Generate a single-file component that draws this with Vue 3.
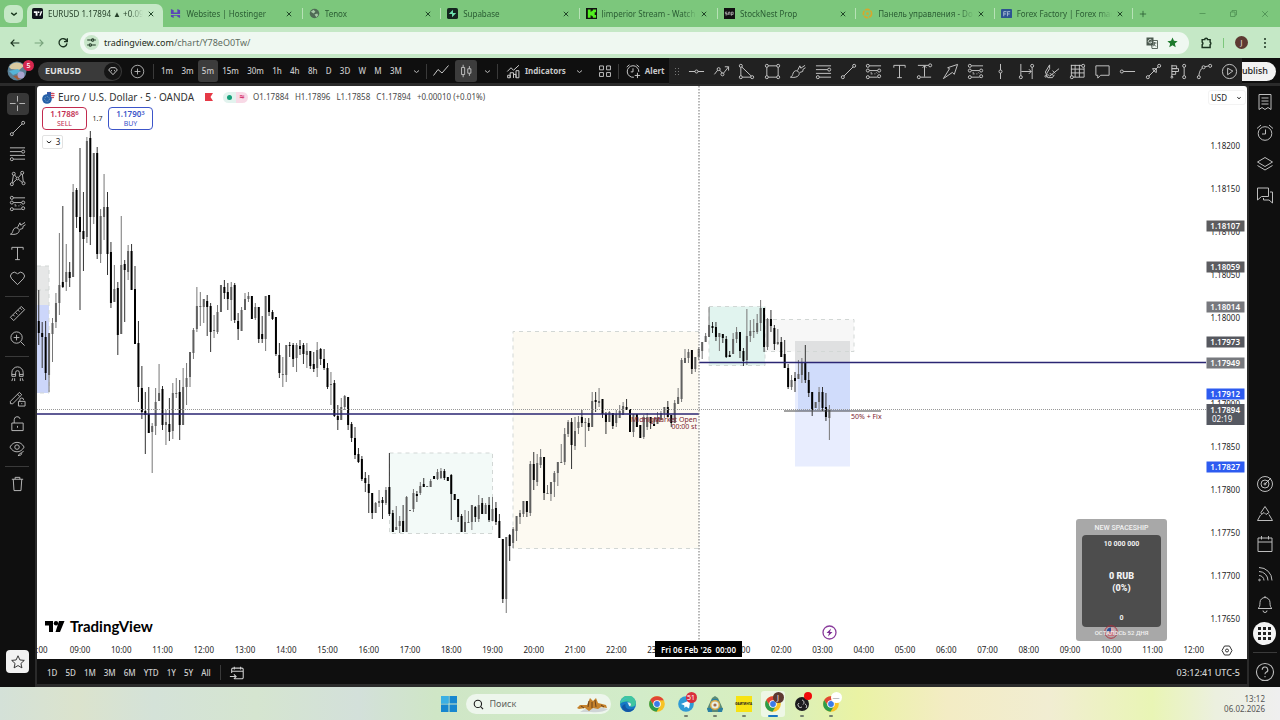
<script setup>
import { h } from 'vue'

const c = (x, y, r = 1.6) => `M${x - r} ${y}a${r} ${r} 0 1 0 ${2 * r} 0a${r} ${r} 0 1 0 ${-2 * r} 0`

const shapes = {
  cross: ['M9 1v6M9 11v6M1 9h6M11 9h6'],
  trend: ['M4.2 13.8L13.8 4.2', c(3, 15), c(15, 3)],
  fib: ['M1 3h16M1 7h12.4M1 11h16M4.6 15H17', c(15, 7), c(3, 15)],
  pattern: ['M3.3 13.4L4.7 5.6M5.8 5L8 8M10.2 7.8l2.9-3.6M14.2 4.6l.9 7.8M13.9 13L10.2 10M8 10L4 13.8', c(3, 15), c(5, 4), c(9, 9, 1.4), c(14, 3), c(15.4, 14)],
  forecast: ['M4.6 3H17M4.6 8h8.8M4.6 15h8.8M6 11.5h2M10 11.5h1M6 10h1M12 10l1 1', c(3, 3), c(3, 8), c(15, 8), c(3, 15), c(15, 14)],
  brush: ['M1.5 15c2-.5 2-2 3-4.500S8 7.500 9.800 9s1.200 4-1 5.300-5 1-7.300.7zM9 8l2.500-5 1 2.500L17 2.500M11.500 10l3-1 .500-2.500L17.500 5'],
  text: ['M3 5V2.500h12V5M9 2.500v13M6.500 15.500h5'],
  heart: ['M9 15.500L2.800 9.200a4 4 0 0 1 0-5.600 4 4 0 0 1 5.600 0L9 4.200l.6-.6a4 4 0 0 1 5.600 0 4 4 0 0 1 0 5.600z'],
  ruler: ['M1.500 13L13 1.500 16.500 5 5 16.500zM4.500 10.500l1.500 1.500M7 8l2 2M9.500 5.500L11 7M12 3.500l1.500 1.500'],
  zoomin: [c(8, 8, 6), 'M12.500 12.500l4 4M8 5v6M5 8h6'],
  magnet: ['M3 12V8a6 6 0 0 1 12 0v4h-4V8a2 2 0 0 0-4 0v4zM3 10h4M11 10h4M4 14l-1 3M6 14v3M12 14v3M14 14l1 3'],
  pencil: ['M1.500 12L11 2.500 13.500 5 4 14.500H1.500zM9 4.500L11.500 7', 'M10 12h7v5h-7zM11.500 12v-1.500a2 2 0 0 1 4 0M13.500 14v1'],
  lock: ['M3 8.500h12v8H3zM5.500 8.500V5a3.200 3.200 0 0 1 6.300-.800M9 11.500v2'],
  eye: ['M1 7.500C3 4 5.500 2.500 8.500 2.500S14 4 16 7.500c-2 3.500-4.500 5-7.500 5S3 11 1 7.500z', c(8.5, 7.5, 2.4), 'M9.500 16.500c1.500 0 1-2.500 3-2.500s1 2.500-3 2.500zM13 13.500l2.500-1.500'],
  trash: ['M3 4.500h12M6.500 4.500v-2h5v2M4.500 4.500l.8 12h7.400l.8-12'],
  star: ['M9 2l2.100 4.700 5 .5-3.800 3.400 1.100 5L9 13l-4.400 2.600 1.100-5L1.900 7.200l5-.5z'],
  hline: ['M1 9h6.400M10.600 9H17', c(9, 9)],
  path: ['M1.500 12L5 7.500M7 7.500l3 3.500M11 11l5.500-7M12.500 4h4v4', c(6, 6.5), c(10, 12)],
  triangle: ['M3 4.600v8.800M4.600 15h8.800M4 4.200L14 13.800', c(3, 3), c(3, 15), c(15, 15)],
  rect: ['M4.600 3h8.800M4.600 15h8.800M3 4.600v8.800M15 4.600v8.800', c(3, 3), c(15, 3), c(3, 15), c(15, 15)],
  anchor: ['M2 2.500h11.400M9 3v11.500M7 5l2-2 2 2M5 15h11', c(3, 15), c(15, 2.5)],
  arrow: ['M1.500 16.500L8 6l-2-1L16.500 1.500 13 12l-2-2z'],
  vline: ['M9 1v6.400M9 10.600V17', c(9, 9)],
  range: ['M3 1v12.400M15 4.600V17M3.500 9H14M11.500 6.500L14 9l-2.500 2.500', c(3, 15), c(15, 3)],
  gann: ['M7 2L2.500 9.500 5 15.500h5l2-3M7 2v4l-3 5 3 3 10-8M7 11l4 2M10 8l3 3', c(3, 14, 1)],
  grid: ['M2 2.500h11.500M2.500 2v12M2 6.500h14M2 10.500h14M4.600 15H16V4.600M6.500 2v13M11 2v13', c(15, 3), c(3, 15)],
  balloon: ['M2 3h14v10H7l-3 3v-3H2z'],
  ray: ['M4.600 9H17', c(3, 9)],
  arrowline: ['M4.200 13.800L13.800 4.200M8 6l4 0 0 4-2-1z', c(3, 15), c(15, 3)],
  profile: ['M2 2v13M2 3h5v3H2M2 6h7v3H2M2 9h4v3H2M15 4.600v8.800', c(2, 15, 1), c(15, 3), c(15, 15)],
  curve: ['M3 13.400C3.500 9 5 6.500 7 5M9.500 4L13.500 3', c(3, 15), c(8, 4.5), c(15, 3)],
  replay: [c(9, 9, 7.5), 'M7 5.500l5.500 3-5.500 4z'],
  line: ['M1.500 13.500L6 7.500l4 3.500 6.500-7.500'],
  candles: ['M4 5h3.500v8H4zM5.800 2v3M5.800 13v3M11 6.500h3.500v5H11zM12.800 3.500v3M12.800 11.500v3'],
  indicators: ['M2 16.500v-3h3v3zM5 16.500v-6h4v6M9 16.500v-4h3v4M12 16.500V8h3.500v8.500zM1.500 9L6 4.500l3 3 6.500-6'],
  layouts: ['M2 2.500h5v5H2zM11 2.500h5v5h-5zM2 11h5v5H2zM11 11h5v5h-5z'],
  alert: ['M10 16a6.500 6.500 0 1 1 5.500-6M9 6v4H6.500M2 4.500l3-2.500M13 2l3 2.500M14 11v6M11 14h6'],
  plus: [c(9, 9, 7.5), 'M9 5.500v7M5.500 9h7'],
  gem: ['M5.500 4h7l3 3.500L9 14.500 2.500 7.500zM6 8l1.500 1M12 8l-1.500 1'],
  chev: ['M4 7l5 4 5-4'],
  list: ['M3 1.500h12v15l-3-2-3 2-3-2-3 2zM5.500 5h7M5.500 8h7M5.500 11h7'],
  clock: [c(9, 9.5, 6.8), 'M9.500 5.500v4.500H6M1 4.500L5 1M17 4.500L13 1'],
  layers: ['M9 2.500l7.500 4.500L9 11.500 1.500 7zM1.500 10.500L9 15l7.500-4.500'],
  chat: ['M1.500 2h11v8.500h-7l-4 3.500zM14 6h2.500v11l-3.500-3H7.500v-2'],
  target: [c(9, 9, 7.5), c(9, 9, 4), c(9, 9, 1), 'M9 9l6-6'],
  ideas: ['M9 1.500l4 6-3 2-2-2-2.500 2-.5-2zM4.500 10L1.500 15.500h15L13 9.500'],
  calendar: ['M2 3h14v13.500H2zM2 7h14M5.500 1v3.500M12.500 1v3.500'],
  feed: ['M3 2.500a13 13 0 0 1 13 13M3 6.500a9 9 0 0 1 9 9M3 10.500a5 5 0 0 1 5 5', c(3.5, 15, .8)],
  bell: ['M2 13.500h14c-1.500-1-2-2.500-2-6a5 5 0 0 0-10 0c0 3.500-.5 5-2 6zM7 15.500a2 2 0 0 0 4 0M9 2.500V1'],
  help: [c(9, 9, 7.7), 'M6.500 7a2.500 2.500 0 1 1 3.500 2.300c-.8.400-1 .8-1 1.700M9 12.500v1.300'],
  goto: ['M6 15.500h8.500a1.500 1.500 0 0 0 1.500-1.500V5a1.500 1.500 0 0 0-1.500-1.500h-10A1.500 1.500 0 0 0 3 5v4M3 7h13M6 2v3M13 2v3M1 13h7M5.500 10.500L8 13l-2.500 2.500'],
  back: ['M15.500 9H3M8 4L3 9l5 5'],
  forward: ['M2.500 9H15M10 4l5 5-5 5'],
  reload: ['M14.500 6A6 6 0 1 0 15 9.500M15.500 2v5h-5'],
  tune: ['M2 5h6M14 5h2M2 13h2M10 13h6', c(11, 5, 2), c(7, 13, 2)],
  close: ['M4 4l10 10M14 4L4 14'],
  min: ['M3 9h12'],
  max: ['M3 6h9v9H3zM6 6V3h9v9h-3'],
  add: ['M9 2v14M2 9h14'],
  puzzle: ['M3 5h3.500a2 2 0 0 1 4 0H14v3.500a2 2 0 0 1 0 3.500v4H3v-4a2 2 0 0 0 0-3.500z'],
  search: [c(8, 8, 6), 'M12.500 12.500l4 4'],
}

const Icon = (p) =>
  h('svg', {
    viewBox: '0 0 18 18', width: p.size || 18, height: p.size || 18, fill: 'none',
    stroke: 'currentColor', 'stroke-width': p.weight || 1, 'aria-hidden': 'true',
  }, shapes[p.name].map((d) => h('path', { d })))
Icon.props = ['name', 'size', 'weight']

const tabs = [
  { title: 'EURUSD 1.17894 ▲ +0.09', icon: 'tv' },
  { title: 'Websites | Hostinger', icon: 'host' },
  { title: 'Tenox', icon: 'globe' },
  { title: 'Supabase', icon: 'supa' },
  { title: 'Jimperior Stream - Watch', icon: 'kick' },
  { title: 'StockNest Prop', icon: 'snp' },
  { title: 'Панель управления - Do', icon: 'ring' },
  { title: 'Forex Factory | Forex mark', icon: 'ff' },
]
const frames = ['1m', '3m', '5m', '15m', '30m', '1h', '4h', '8h', 'D', '3D', 'W', 'M', '3M']
const drawTools = ['hline', 'path', 'triangle', 'rect', 'brush', 'fib', 'trend', 'forecast', 'text', 'anchor', 'arrow',
  'forecast', 'vline', 'range', 'gann', 'grid', 'balloon', 'ray', 'arrowline', 'profile', 'curve', 'replay']
const leftTools = [
  ['cross', 'trend', 'fib', 'pattern', 'forecast', 'brush', 'text', 'heart'],
  ['ruler', 'zoomin'],
  ['magnet', 'pencil', 'lock', 'eye'],
  ['trash'],
]
const ranges = ['1D', '5D', '1M', '3M', '6M', 'YTD', '1Y', '5Y', 'All']
const ohlc = ['O1.17884', 'H1.17896', 'L1.17858', 'C1.17894', '+0.00010 (+0.01%)']

// high, body top, body bottom, low, falling
const raw = `290 321 333 345 1|322 333 337 368 1|321 337 373 380 1|333 333 375 392 0|318 323 334 362 0|293 303 322 328 0
233 285 303 315 0|206 282 287 288 1|244 272 282 291 0|262 272 278 287 1|184 192 277 277 0|188 190 217 228 1
148 217 232 310 1|192 231 239 271 1|137 141 237 243 0|131 138 217 245 1|153 153 217 224 0|147 153 254 259 1
209 216 254 263 0|174 207 217 240 0|192 207 254 275 1|242 252 303 308 1|265 289 302 302 0|282 288 335 355 1
216 265 334 334 0|260 264 270 322 1|245 251 272 280 0|244 251 290 290 1|266 289 344 344 1|321 343 387 402 1
366 388 412 419 1|392 411 415 454 1|387 414 433 433 1|423 426 432 473 0|388 402 426 435 0|364 393 401 401 0
386 389 425 430 1|410 422 425 445 0|398 424 432 441 1|383 393 431 439 0|378 393 394 398 0|380 392 425 440 1
368 387 425 425 0|363 378 387 405 0|352 352 377 387 0|328 330 353 359 0|287 306 329 332 0|292 306 307 326 0
299 299 307 323 0|295 301 307 336 1|303 306 332 352 1|315 330 331 338 0|305 312 332 334 0|285 285 312 312 0
280 287 293 299 1|283 292 299 310 1|282 287 300 321 0|283 285 320 323 1|313 321 329 340 1|307 310 331 331 0
293 299 310 310 0|292 296 299 302 0|296 296 319 319 1|303 307 318 320 0|307 307 339 343 1|316 334 339 343 1
296 296 339 351 0|295 295 312 316 1|310 312 319 320 1|317 317 354 356 1|343 355 373 378 1|357 374 375 387 0
345 345 375 382 0|342 345 346 357 1|343 345 359 367 1|343 345 358 372 0|340 346 349 355 1|343 345 354 364 1
343 351 355 368 0|351 351 366 369 1|352 364 369 372 1|342 350 368 377 0|348 349 359 365 1|349 359 368 370 1
363 368 387 389 1|372 384 385 405 0|380 383 416 417 1|405 416 420 430 1|398 407 420 420 0|395 396 407 410 0
397 397 425 430 1|422 424 438 442 1|427 438 455 459 1|448 454 462 463 1|456 459 479 481 1|472 478 483 492 1
475 484 493 513 1|493 493 513 519 1|502 503 513 513 0|490 501 503 507 0|497 500 503 519 1|487 490 503 505 0
453 487 514 516 1|510 513 532 532 1|506 527 530 530 0|516 521 526 533 0|505 521 532 532 1|496 497 532 532 0
510 510 511 511 0|489 493 509 512 0|491 494 496 502 1|482 486 493 495 0|478 484 487 487 1|486 486 487 487 0
479 481 487 487 0|476 476 479 479 1|469 472 479 480 0|468 471 478 479 0|469 471 478 480 1|477 477 481 481 1
474 475 494 520 1|494 494 500 500 1|499 499 517 522 1|514 516 532 532 1|510 522 532 532 0|511 522 523 523 0
505 505 522 530 0|506 507 517 522 1|495 505 519 522 0|498 503 514 514 1|503 505 514 514 0|497 505 520 522 1
497 509 521 521 0|502 508 522 525 1|514 521 538 538 1|539 539 599 603 1|537 537 599 613 0|534 535 546 561 1
527 529 543 548 0|516 516 531 541 0|510 513 517 524 0|501 501 514 517 0|501 501 512 517 1|461 464 513 516 0
452 464 480 490 1|454 463 482 486 0|449 457 465 468 0|457 457 493 500 1|485 493 494 494 0|482 482 494 501 0
471 473 482 497 0|462 462 473 486 0|444 462 463 463 0|428 434 462 465 0|420 422 434 437 0|418 422 445 469 1
417 431 446 450 0|416 422 428 434 0|410 417 423 427 1|418 422 423 447 0|418 423 427 431 1|392 401 427 427 0
392 400 402 412 1|388 401 403 407 0|399 399 414 418 1|412 414 422 434 1|411 412 422 422 0|413 413 426 429 1
410 414 423 427 0|405 411 418 418 0|402 406 415 415 0|399 407 410 410 1|409 409 432 432 1|414 414 432 437 0
414 414 427 427 1|425 425 438 438 1|415 417 437 439 0|413 417 427 430 0|417 417 423 429 1|418 424 426 426 1
412 417 424 424 0|411 413 420 420 0|407 407 413 418 0|401 407 417 417 1|415 415 423 427 1|400 403 423 423 0
388 397 404 404 0|358 360 399 402 0|349 358 363 363 0|349 352 358 363 0|350 350 369 374 1|357 357 369 372 0
347 349 357 360 0|342 342 351 359 0|333 336 342 342 0|307 325 337 337 0|322 326 328 333 1|322 327 337 341 1
333 333 337 351 0|334 334 338 343 1|336 339 357 358 1|351 355 357 357 1|333 339 354 354 0|327 332 339 343 0
332 332 351 358 1|348 351 361 366 1|309 336 360 365 0|320 331 336 342 0|319 331 332 338 0|314 323 332 334 0
300 308 323 331 0|308 308 347 352 1|318 319 347 350 0|310 319 326 332 1|325 328 344 350 1|329 342 344 345 0
337 342 357 357 1|340 354 368 368 1|364 368 387 389 1|375 380 387 390 0|372 378 381 392 1|360 374 379 379 0
358 363 375 383 0|345 362 380 383 1|372 380 393 397 1|392 392 410 416 1|402 402 408 408 0|387 392 402 410 0
387 392 408 411 1|393 407 417 421 1|405 409 418 440 0`
const candles = raw.split(/[|\n]/).map((row, n) => {
  const [high, top, bottom, low, down] = row.trim().split(' ').map(Number)
  return { x: 80 + 3.4375 * (n - 12), high, top, bottom, low, down }
})

const hours = Array.from({ length: 28 }, (_, k) => ({ x: 80 + 41.25 * k, label: String((9 + k) % 24).padStart(2, '0') + ':00' }))
  .filter((t) => t.label !== '00:00')
const prices = Array.from({ length: 12 }, (_, k) => ({ y: 146 + 43 * k, label: (1.182 - 0.0005 * k).toFixed(5) })).filter((p) => p.label !== '1.17950')
const tags = [
  { y: 226, v: '1.18107', c: '#5c5c5e' },
  { y: 267, v: '1.18059', c: '#5c5c60' },
  { y: 307, v: '1.18014', c: '#77787d' },
  { y: 342, v: '1.17973', c: '#56585f' },
  { y: 363, v: '1.17949', c: '#77797e' },
  { y: 394, v: '1.17912', c: '#2d5bf0' },
  { y: 467, v: '1.17827', c: '#2d5bf0' },
]
const apps = ['edge', 'chrome', 'telegram', 'tri', 'yellow', 'chromeJ', 'obs', 'chromeW']
</script>

<template>
  <div class="screen">
    <header class="tabstrip">
      <button class="tabsearch" aria-label="Search tabs"><Icon name="chev" size="10" weight="2.5" /></button>
      <nav class="tabs">
        <div v-for="(t, i) in tabs" :key="t.title" class="tab" :class="{ active: i === 0 }">
          <svg class="fav" viewBox="0 0 12 12" aria-hidden="true">
            <template v-if="t.icon === 'tv'"><rect width="12" height="12" rx="2" fill="#10131c" /><path d="M2 3.500h4v5H4V5.500H2zM8 8.500l1.500-5h1.800L9.300 8.500z" fill="#fff" /><circle cx="7.200" cy="4.500" r="1" fill="#fff" /></template>
            <path v-else-if="t.icon === 'host'" d="M1 1l3 1.500V5h4V1l3 1.500V6.500H1zM1 7.500h10V11L8 9.500V8.500H4V11L1 9.500z" fill="#5a46b8" />
            <template v-else-if="t.icon === 'globe'"><circle cx="6" cy="6" r="5.200" fill="#4f6b55" /><path d="M2 4l3-2 2 2-2 2zM6 7l3-1 1 2-2 2z" fill="#a7c9a7" /></template>
            <template v-else-if="t.icon === 'supa'"><rect width="12" height="12" rx="2" fill="#14251f" /><path d="M6.500 2v3.500H10L5.500 10V6.500H2z" fill="#6ee0ae" /></template>
            <template v-else-if="t.icon === 'kick'"><rect width="12" height="12" fill="#111" /><path d="M2 1.500h3V4h1V3h1.500V1.500H11V4.500H9.500v3H11v3H7.500V9H6V8H5v2.500H2z" fill="#52ee20" /></template>
            <template v-else-if="t.icon === 'snp'"><rect width="12" height="12" fill="#111" /><path d="M3.500 4.500H1.500v1.500h2v1.500h-2M5 7.500v-3h1.500v3M8 8.500v-4h2v2.500H8" fill="none" stroke="#ddd" stroke-width=".7" /></template>
            <template v-else-if="t.icon === 'ring'"><circle cx="6" cy="6" r="4.500" fill="none" stroke="#d5a82d" stroke-width="1.800" stroke-dasharray="5 1" /><circle cx="6" cy="6" r="1.500" fill="#d5a82d" /></template>
            <template v-else><rect y="1" width="12" height="10" rx="1" fill="#2c5292" /><path d="M3 9V4h3M3 6.500h2.500M7 9V4h3M7 6.500h2.500" fill="none" stroke="#bcd" stroke-width=".9" /></template>
          </svg>
          <span class="ttl">{{ t.title }}</span>
          <button class="tclose" aria-label="Close tab"><Icon name="close" size="8" weight="2.200" /></button>
        </div>
      </nav>
      <button class="newtab" aria-label="New tab"><Icon name="add" size="8" weight="1.800" /></button>
      <div class="wins">
        <button aria-label="Minimize"><Icon name="min" size="9" weight="1.500" /></button>
        <button aria-label="Restore"><Icon name="max" size="9" weight="1.500" /></button>
        <button aria-label="Close"><Icon name="close" size="10" weight="1.500" /></button>
      </div>
    </header>

    <div class="addressbar">
      <button class="nav" aria-label="Back"><Icon name="back" size="12" weight="1.800" /></button>
      <button class="nav dim" aria-label="Forward"><Icon name="forward" size="12" weight="1.800" /></button>
      <button class="nav" aria-label="Reload"><Icon name="reload" size="12" weight="2" /></button>
      <div class="omni">
        <button class="site" aria-label="Site information"><Icon name="tune" size="11" weight="1.800" /></button>
        <a href="#" class="url"><b>tradingview.com</b>/chart/Y78eO0Tw/</a>
        <svg width="12" height="12" viewBox="0 0 12 12" aria-hidden="true"><rect x=".5" y=".5" width="7" height="8" fill="#4c5a50" /><path d="M5 3.500h6.500v8H6zM7 6h3.500M8.700 5v1c0 2-1 3-2 3.500M7.500 7l2.500 2.500" fill="none" stroke="#4c5a50" stroke-width=".9" /><path d="M5.500 3A1.800 1.800 0 1 0 5.800 5H4.300" fill="none" stroke="#eef8f0" stroke-width=".8" /></svg>
        <svg width="11" height="11" viewBox="0 0 12 12" aria-hidden="true"><path d="M6 .5l1.600 3.700 4 .3-3 2.600.9 4L6 9l-3.500 2.100.9-4-3-2.600 4-.3z" fill="#1d7a2c" /></svg>
      </div>
      <button class="nav ext" aria-label="Extensions"><Icon name="puzzle" size="13" weight="2" /></button>
      <i class="vbar"></i>
      <button class="user" aria-label="Profile">J</button>
      <button class="kebab" aria-label="Menu"><i></i><i></i><i></i></button>
    </div>

    <div class="topbar">
      <button class="avatar" aria-label="Account">
        <svg width="20" height="20" viewBox="0 0 20 20" aria-hidden="true"><circle cx="10" cy="10" r="9.500" fill="#5b7f95" /><path d="M2 6a9 9 0 0 1 15-1l-5 4-8-1z" fill="#d8c9a0" /><path d="M2 10l9-2 3 3-8 3z" fill="#55b4d8" /><path d="M6 15l7-1 2 3-4 2z" fill="#a05c3a" /><circle cx="14" cy="14" r="3.500" fill="#aaa4cf" /></svg>
        <span class="count">5</span>
      </button>
      <button class="symbol"><span>EURUSD</span><i><Icon name="gem" size="12" weight="1.300" /></i></button>
      <button class="ib add" aria-label="Compare"><Icon name="plus" size="15" /></button>
      <i class="sep"></i>
      <div class="frames"><button v-for="f in frames" :key="f" :class="{ on: f === '5m' }">{{ f }}</button></div>
      <button class="ib slim" aria-label="More intervals"><Icon name="chev" size="9" weight="1.800" /></button>
      <i class="sep"></i>
      <button class="ib wide" aria-label="Line"><Icon name="line" /></button>
      <button class="ib on" aria-label="Candles"><Icon name="candles" size="16" /></button>
      <button class="ib slim" aria-label="Chart types"><Icon name="chev" size="9" weight="1.800" /></button>
      <i class="sep"></i>
      <button class="lbl"><Icon name="indicators" size="15" weight="1.200" />Indicators</button>
      <button class="ib wide" aria-label="Templates"><Icon name="chev" size="9" weight="1.800" /></button>
      <button class="ib" aria-label="Layouts"><Icon name="layouts" size="14" weight="1.200" /></button>
      <i class="sep gap"></i>
      <button class="lbl alert"><Icon name="alert" size="16" weight="1.100" />Alert</button>
      <div class="favs">
        <i class="grip"></i>
        <button v-for="(t, i) in drawTools" :key="i" :aria-label="t"><Icon :name="t" size="17" /></button>
      </div>
      <div class="pubwrap"><button class="publish">Publish</button></div>
    </div>

    <main class="body">
      <aside class="left">
        <template v-for="(g, gi) in leftTools" :key="gi">
          <i v-if="gi" class="hsep"></i>
          <button v-for="t in g" :key="t" class="tool" :class="{ on: t === 'cross' }" :aria-label="t"><span><Icon :name="t" size="17" /></span></button>
        </template>
        <button class="starbtn" aria-label="Favorites"><Icon name="star" size="16" /></button>
      </aside>

      <section class="center">
        <div class="chart">
          <svg class="plot" viewBox="37 86 1210 573" preserveAspectRatio="xMaxYMin slice">
            <rect x="37" y="266" width="12" height="39" fill="#e6e7e7" />
            <rect x="37" y="305" width="12" height="88" fill="#ccd6fa" />
            <path class="dash" d="M37 266h12v127H37M37 290h12" />
            <rect class="dash" x="389.500" y="453" width="103" height="80.500" fill="#f3faf8" />
            <rect x="513" y="331.500" width="186" height="217" fill="#fdfaf2" />
            <path class="dash" d="M699 331.500H513v217h186" />
            <rect class="dash" x="709" y="306.500" width="56" height="59" fill="#e1f4ef" />
            <rect class="dash" x="765" y="319.500" width="89" height="32" fill="#f7f7f7" />
            <rect x="795" y="341" width="55" height="21" fill="#dfe0e1" />
            <rect x="795" y="362" width="55" height="104.500" fill="#e8edfe" />
            <rect x="798" y="362" width="52" height="49" fill="#d0dcfb" />
            <path class="dash" d="M797 351.500h57" />
            <g v-for="k in candles" :key="k.x">
              <rect :x="k.x - 0.5" :y="k.high" width="1" :height="k.low - k.high" :fill="k.down ? '#333' : '#777'" />
              <rect :x="k.x - 1" :y="k.top" width="2" :height="k.bottom - k.top" :fill="k.down ? '#000' : '#606060'" />
            </g>
            <path d="M37 414h662M699 362.500h507" stroke="#2b2673" stroke-width="1.500" />
            <path d="M784 411h97" stroke="#444" />
            <path d="M37 409.500h1169" stroke="#999" stroke-dasharray="1 1" />
            <path d="M699 86v555" stroke="#888" stroke-width="1.200" stroke-dasharray="1.500 1.500" />
            <g class="note">
              <text x="631" y="422">Midnight</text>
              <text x="697" y="422" text-anchor="end">Market Open</text>
              <text x="697" y="429" text-anchor="end">00:00 st</text>
              <text x="851" y="419">50% + Fix</text>
            </g>
            <circle cx="829.500" cy="632.500" r="6.500" fill="#fff" stroke="#8a3c9c" stroke-width="1.300" />
            <path d="M831 628.500l-4.500 4.500h2.500l-1 3.500 4.500-4.500h-2.500z" fill="#7d2e93" />
            <g class="axis">
              <text x="42" y="653" text-anchor="middle">:00</text>
              <text v-for="t in hours" :key="t.x" :x="t.x" y="653" text-anchor="middle">{{ t.label }}</text>
              <text v-for="p in prices" :key="p.y" x="1240" :y="p.y + 3" text-anchor="end">{{ p.label }}</text>
            </g>
            <g v-for="t in tags" :key="t.v">
              <rect x="1206.500" :y="t.y - 5.5" width="38" height="11" :fill="t.c" />
              <text class="tag" x="1240" :y="t.y + 3" text-anchor="end">{{ t.v }}</text>
            </g>
            <rect x="1206.500" y="404" width="38" height="21" fill="#555861" />
            <text class="tag" x="1240" y="413" text-anchor="end">1.17894</text>
            <text class="tag thin" x="1212" y="422">02:19</text>
            <rect x="655" y="641" width="87" height="16" fill="#000" />
            <text class="tag" x="661" y="653">Fri 06 Feb '26</text>
            <text class="tag" x="736" y="653" text-anchor="end">00:00</text>
            <path d="M1224.500 646h5l2.500 4.500-2.500 4.500h-5l-2.500-4.500z" fill="none" stroke="#333" />
            <circle cx="1227" cy="650.500" r="1.500" fill="none" stroke="#333" />
          </svg>

          <div class="legend">
            <div class="title">
              <svg width="13" height="13" viewBox="0 0 13 13" aria-hidden="true"><circle cx="8.500" cy="4.500" r="4" fill="#e9d6dc" /><path d="M6 2.500h6.500M8 4.500h4.500M8 6.500h4" stroke="#d64a5c" /><path d="M5 1h4v4H5z" fill="#3758a8" /><circle cx="5" cy="8" r="4.800" fill="#2560a8" /><circle cx="5" cy="8" r="2.400" fill="none" stroke="#86a8c8" stroke-dasharray="1 1" /></svg>
              <h1>Euro / U.S. Dollar · 5 · OANDA</h1>
              <svg class="flag" width="8" height="8" viewBox="0 0 8 8" aria-hidden="true"><path d="M0 0h8L5.500 4 8 8H0z" fill="#e63946" /></svg>
              <span class="state"><i></i><b>≈</b></span>
              <span v-for="o in ohlc" :key="o" class="o">{{ o }}</span>
            </div>
            <div class="deal">
              <button class="sell"><b>1.1788<sup>6</sup></b>SELL</button>
              <span>1.7</span>
              <button class="buy"><b>1.1790<sup>3</sup></b>BUY</button>
            </div>
            <button class="fold"><Icon name="chev" size="8" weight="2.200" />3</button>
          </div>

          <label class="cur"><select aria-label="Currency"><option>USD</option></select><Icon name="chev" size="6" weight="3" /></label>

          <div class="brand">
            <svg width="20" height="11" viewBox="0 0 20 11" aria-hidden="true"><path d="M0 0h8v11H4V4.500H0zM14 0h5.500L15 11h-4.500z" fill="#000" /><circle cx="11" cy="2.200" r="2.200" fill="#000" /></svg>
            TradingView
          </div>

          <div class="goal">
            <svg class="us" width="14" height="14" viewBox="0 0 14 14" aria-hidden="true"><circle cx="7" cy="7" r="6.300" fill="none" stroke="#b5283a" /><circle cx="7" cy="7" r="4.500" fill="#dba8ae" /><path d="M3 8h8M4 10h6" stroke="#bd3346" /><path d="M2.700 6.500A4.500 4.500 0 0 1 7 2.500v4z" fill="#234a9a" /></svg>
            <p>NEW SPACESHIP</p>
            <div><span>10 000 000</span><strong>0 RUB<br />(0%)</strong><span>0</span></div>
            <p class="over">ОСТАЛОСЬ 52 ДНЯ</p>
          </div>
        </div>

        <footer class="bottom">
          <button v-for="r in ranges" :key="r">{{ r }}</button>
          <i class="sep"></i>
          <button class="goto" aria-label="Go to"><Icon name="goto" size="16" weight="1.200" /></button>
          <button class="utc">03:12:41 UTC-5</button>
        </footer>
      </section>

      <aside class="right">
        <button v-for="t in ['list', 'clock', 'layers', 'chat']" :key="t" class="upper" :aria-label="t"><Icon :name="t" /></button>
        <span class="grow"></span>
        <button v-for="t in ['target', 'ideas', 'calendar', 'feed', 'bell']" :key="t" :aria-label="t"><Icon :name="t" /></button>
        <button aria-label="Products"><span class="dots"><i v-for="n in 9" :key="n"></i></span></button>
        <i class="hsep"></i>
        <button aria-label="Help"><Icon name="help" size="20" /></button>
      </aside>
    </main>

    <footer class="taskbar">
      <div class="tray">
        <button class="app" aria-label="Start"><svg width="16" height="16" viewBox="0 0 16 16" aria-hidden="true"><path d="M0 0h7.500v7.500H0zM8.500 0H16v7.500H8.500zM0 8.500h7.500V16H0zM8.500 8.500H16V16H8.500z" fill="#1787cf" /><path d="M0 0h7.500v7.500H0z" fill="#3bb0e4" /></svg></button>
        <label class="find">
          <Icon name="search" size="11" weight="1.800" />
          <input type="text" aria-label="Поиск" placeholder="Поиск" />
          <svg width="34" height="18" viewBox="0 0 34 18" aria-hidden="true"><path d="M5 17q11-8 28-3-6 4-17 3z" fill="#cfd5d6" /><path d="M2 13l3-3 7 0 3-7 3 3 3-3 2 5 8 2 1 3-6-1-3 2-5-1-4 3-4-3-6 1z" fill="#c5822c" /><path d="M14 6l-1 6M20 5l1 7M6 11l3 2M26 10l3 2M17 7v6" stroke="#6b431d" /></svg>
        </label>
        <button v-for="a in apps" :key="a" class="app" :class="a" :aria-label="a">
          <svg v-if="a === 'edge'" width="16" height="16" viewBox="0 0 16 16" aria-hidden="true"><circle cx="8" cy="8" r="8" fill="#1679c5" /><path d="M0 8A8 8 0 0 1 16 7c0 3-3 4.500-6 3.500 2-3 0-5.500-4-5S1 7 0 8z" fill="#3fc6a0" /><path d="M0 8a7 7 0 0 1 9-5.500C5 2 1 5 0 8z" fill="#45b6e6" /><path d="M5.500 8c-1 4.500 3 7 9 4.500-3 4-8 4.500-11 1.500s-1-5 2-6z" fill="#1456a3" /><path d="M10 10.500c-2-1-1-3.500-3-3.500 3-1.500 5.500 1.500 3 3.500z" fill="#e6f3ee" /></svg>
          <svg v-else-if="a.startsWith('chrome')" width="16" height="16" viewBox="0 0 16 16" aria-hidden="true"><circle cx="8" cy="8" r="7.800" fill="#f7c325" /><path d="M1.200 4.100A7.800 7.800 0 0 1 14.800 4.200L8 4.400 5 9.500z" fill="#e04435" /><path d="M1.200 4.100A7.800 7.800 0 0 0 7.500 15.800L11 10 5 10z" fill="#2d9c4b" /><circle cx="8" cy="8" r="3.800" fill="#fff" /><circle cx="8" cy="8" r="2.900" fill="#3a7be8" /></svg>
          <svg v-else-if="a === 'telegram'" width="16" height="16" viewBox="0 0 16 16" aria-hidden="true"><circle cx="8" cy="8" r="7.800" fill="#2f9ad6" /><path d="M3 8l9.500-4-1.500 8.500-3-2-1.500 1.500-.3-2.800z" fill="#fff" /></svg>
          <svg v-else-if="a === 'tri'" width="18" height="18" viewBox="0 0 18 18" aria-hidden="true"><path d="M9 1l3 2 5 11-2 3H3l-2-3L6 3z" fill="#5d8b74" /><path d="M6 4h6v3H6zM1 13h5v4H2zM12 13h5l-1 4h-4z" fill="#2a80a3" /><circle cx="9" cy="10" r="5" fill="#e0ae4a" /><circle cx="9" cy="10" r="3.600" fill="#e8efe7" /><circle cx="9" cy="10" r="1.600" fill="#a76c44" /></svg>
          <span v-else-if="a === 'yellow'" class="sq">ФАЙТИНГА</span>
          <svg v-else width="16" height="16" viewBox="0 0 16 16" aria-hidden="true"><circle cx="8" cy="8" r="7" fill="#1c1c1f" /><path d="M8 4a2.500 2.500 0 0 1 1 4.500M5 7a2.500 2.500 0 0 0 3 4M11 8a2.500 2.500 0 0 1 1 4" fill="none" stroke="#c8c8c8" /></svg>
          <em v-if="a === 'telegram'">51</em>
          <em v-if="a === 'chromeJ'" class="j">J</em>
          <em v-if="a === 'obs'" class="rec"></em>
          <em v-if="a === 'chromeW'" class="w">—</em>
        </button>
      </div>
      <time>13:12<br />06.02.2026</time>
    </footer>
  </div>
</template>

<style>
html, body { margin: 0; height: 100%; overflow: hidden; }
</style>

<style scoped>
* { box-sizing: border-box; }
.screen { height: 100vh; display: flex; flex-direction: column; font-family: "Noto Sans", "Open Sans", sans-serif; font-size: 8px; line-height: 10px; color: #1c1c1c; }
button { border: 0; background: none; padding: 0; margin: 0; font: inherit; color: inherit; display: flex; align-items: center; justify-content: center; }
i, em { font-style: normal; }
svg { flex: none; }

.tabstrip { height: 27px; flex: none; display: flex; align-items: center; background: #7cc77c; color: #2a5c33; }
.tabsearch { width: 19px; height: 18px; margin: 0 2px 0 4px; border-radius: 6px; background: #c5e8c6; color: #1c3a20; }
.tabs { flex: 1; display: flex; align-self: stretch; min-width: 0; }
.tab { flex: 1; min-width: 0; display: flex; align-items: center; padding: 0 8px 0 6px; position: relative; }
.tab:not(.active)::after { content: ""; position: absolute; right: 0; top: 8px; width: 1px; height: 11px; background: #b7e2b6; }
.tab.active { background: #c5e8c6; color: #26402a; border-radius: 7px 7px 0 0; margin: 4px 1px 0 2px; padding: 0 7px 4px 5px; }
.fav { width: 11px; height: 11px; margin-right: 5px; }
.ttl { flex: 1; min-width: 0; overflow: hidden; white-space: nowrap; line-height: 14px; mask-image: linear-gradient(90deg, #000 85%, transparent 100%); }
.tclose { width: 11px; height: 11px; margin-left: 2px; color: #1f4527; }
.newtab { width: 20px; height: 20px; }
.wins { display: flex; margin-left: 34px; color: #4b8c50; }
.wins button { width: 31px; height: 27px; }

.addressbar { height: 31px; flex: none; display: flex; align-items: center; background: #c5e8c6; padding: 0 10px 0 3px; color: #1b3320; }
.nav { width: 24px; height: 22px; }
.nav.dim { color: #78a37c; }
.omni { flex: 1; height: 22px; margin: 0 8px 0 5px; border-radius: 11px; background: #eff8f1; display: flex; align-items: center; gap: 9px; padding: 0 11px 0 4px; }
.site { width: 15px; height: 15px; border-radius: 50%; background: #c8e6c9; }
.url { flex: 1; color: #5e6d61; text-decoration: none; font-size: 9px; line-height: 14px; margin-left: -4px; }
.url b { font-weight: 400; color: #1d2c20; }
.ext { width: 18px; }
.vbar { width: 1px; height: 10px; background: #7cc77c; margin: 0 11px 0 8px; }
.user { width: 13px; height: 13px; border-radius: 50%; background: #5d3a32; color: #eee; font-size: 7px; }
.kebab { flex-direction: column; gap: 2px; width: 10px; margin-left: 12px; }
.kebab i { width: 2px; height: 2px; background: #1b3320; border-radius: 50%; }

.topbar { height: 28px; flex: none; display: flex; align-items: center; background: #0f0f0f; color: #c9c9c9; border-bottom: 3px solid #2b2b2b; padding-top: 1px; font-weight: 500; }
.topbar .sep { width: 1px; height: 15px; background: #3a3a3a; flex: none; }
.topbar .sep.gap { margin-left: 2px; }
.avatar { position: relative; width: 30px; margin: 0 4px 0 4px; height: 22px; justify-content: flex-start; padding-left: 3px; }
.count { position: absolute; right: 0; top: 0; width: 11px; height: 11px; border-radius: 50%; background: #d5274f; color: #fff; font-size: 7px; line-height: 11px; }
.symbol { width: 84px; height: 19px; border-radius: 10px; background: #3a3a3a; justify-content: space-between; padding: 0 1px 0 7px; font-weight: 700; color: #e2e2e2; font-size: 9px; }
.symbol i { width: 17px; height: 17px; border-radius: 50%; background: #151515; display: flex; align-items: center; justify-content: center; }
.ib { width: 22px; height: 22px; border-radius: 3px; flex: none; }
.ib.on, .frames .on { background: #3c3c3c; border-radius: 3px; }
.add { width: 31px; }
.frames { display: flex; margin-left: 3px; width: 249px; justify-content: space-between; }
.frames button { height: 22px; padding: 0 4px; }
.slim { width: 20px; }
.wide { width: 28px; }
.lbl { gap: 4px; margin-left: 8px; height: 22px; font-size: 8px; font-weight: 700; flex: none; }
.lbl.alert { margin-left: 6px; margin-right: 4px; }
.favs { flex: 1; min-width: 0; display: flex; align-items: center; height: 26px; background: #212121; }
.favs button { flex: 1; min-width: 0; }
.grip { width: 6px; height: 9px; margin: 0 4px 0 5px; flex: none; background: radial-gradient(circle, #777 1px, transparent 1px) 0 0 / 3px 3px; }
.pubwrap { width: 38px; flex: none; overflow: hidden; display: flex; justify-content: flex-end; padding-right: 4px; }
.publish { flex: none; height: 19px; border-radius: 10px; background: #f2f2f2; color: #1a1a1a; padding: 0 8px; font-size: 9px; }

.body { flex: 1; min-height: 0; display: flex; background: #2b2b2b; color: #bdbdbd; }
.left { width: 35px; flex: none; margin-right: 2px; background: #0f0f0f; display: flex; flex-direction: column; align-items: flex-start; padding-top: 5px; }
.tool { width: 35px; height: 25px; flex: none; }
.tool span { width: 22px; height: 22px; border-radius: 4px; display: flex; align-items: center; justify-content: center; }
.tool.on span { background: #383838; }
.hsep { width: 24px; height: 1px; background: #3a3a3a; margin: 5px 0 4px 5px; flex: none; }
.starbtn { width: 23px; height: 23px; background: #f2f2f2; color: #222; border-radius: 4px; margin: auto 0 14px 6px; }
.center { flex: 1; min-width: 0; display: flex; flex-direction: column; }
.chart { flex: 1; min-height: 0; position: relative; background: #fff; color: #1c1c1c; overflow: hidden; border-radius: 3px 3px 0 0; }
.plot { width: 100%; height: 100%; display: block; }
.dash { stroke: #d2d7d5; stroke-width: 1; stroke-dasharray: 4 4; }
path.dash { fill: none; }
.axis { font-size: 8px; fill: #262626; }
.tag { font-size: 8px; font-weight: 600; fill: #fff; white-space: pre; }
.tag.thin { font-weight: 400; }
.note { font-size: 7px; fill: #7c2430; }
.legend { position: absolute; left: 5px; top: 4px; }
.title { display: flex; align-items: center; height: 14px; color: #333; }
.title h1 { font-size: 10px; line-height: 14px; font-weight: 400; margin: 0 11px 0 3px; white-space: nowrap; }
.flag { margin-right: 10px; }
.state { display: flex; width: 25px; height: 11px; border-radius: 6px; overflow: hidden; margin-right: 5px; background: linear-gradient(90deg, #e2f3ee 50%, #f8d9e6 50%); align-items: center; justify-content: space-around; }
.state i { width: 5px; height: 5px; border-radius: 50%; background: #16a07a; }
.state b { color: #d42a68; font-size: 9px; }
.o { margin-right: 6px; color: #4a4a4a; white-space: nowrap; }
.deal { display: flex; align-items: center; margin-top: 3px; }
.deal button { width: 45px; height: 23px; border: 1px solid; border-radius: 4px; background: #fff; flex-direction: column; font-size: 7px; line-height: 9px; }
.deal b { font-size: 8px; line-height: 10px; font-weight: 600; }
.deal sup { font-size: 6px; line-height: 6px; vertical-align: 2px; }
.deal .sell { color: #c22b4f; }
.deal .buy { color: #3c55c9; }
.deal span { width: 21px; text-align: center; font-size: 7px; }
.fold { margin-top: 5px; width: 21px; height: 14px; border: 1px solid #e2e2e2; border-radius: 2px; background: #fff; gap: 3px; }
.cur { position: absolute; right: 1px; top: 4px; width: 38px; height: 15px; border: 1px solid #f3f3f3; border-radius: 3px; display: flex; align-items: center; padding-right: 3px; }
.cur select { appearance: none; border: 0; background: none; font: inherit; font-size: 8px; padding: 0 0 0 2px; width: 28px; color: #222; }
.brand { position: absolute; left: 8px; bottom: 24px; display: flex; align-items: center; gap: 5px; font-family: Lato, sans-serif; font-weight: 700; font-size: 15px; line-height: 18px; color: #000; }
.goal { position: absolute; right: 80px; bottom: 18px; width: 91px; height: 122px; background: #a8a8a8; border-radius: 3px; padding: 4px 6px 3px; display: flex; flex-direction: column; align-items: center; justify-content: space-between; color: #f2f2f2; font-family: Roboto, "DejaVu Sans Condensed", sans-serif; }
.goal p { margin: 0; font-size: 7px; line-height: 10px; white-space: nowrap; font-weight: 500; }
.goal .over { position: relative; font-size: 6px; }
.goal div { width: 79px; height: 92px; background: #4d4d4d; border-radius: 4px; padding: 4px 0; display: flex; flex-direction: column; align-items: center; justify-content: space-between; font-weight: 700; font-size: 7px; }
.goal strong { font-size: 9px; line-height: 12px; text-align: center; padding-top: 2px; }
.us { position: absolute; left: 28px; bottom: 2px; opacity: .9; }
.bottom { height: 28px; flex: none; display: flex; align-items: center; background: #0f0f0f; border-bottom: 3px solid #2b2b2b; color: #d0d0d0; font-weight: 500; padding: 2px 7px 0 6px; }
.bottom button { padding: 0 4px; height: 20px; }
.bottom .sep { width: 1px; height: 15px; background: #3a3a3a; margin: 0 4px 0 5px; }
.bottom .utc { margin-left: auto; padding: 0; font-size: 9px; }
.right { width: 31px; flex: none; margin-left: 2px; background: #0f0f0f; display: flex; flex-direction: column; align-items: center; padding-bottom: 1px; }
.right button { width: 31px; height: 30px; flex: none; padding-top: 1px; }
.right .upper { height: 31px; }
.right .hsep { margin: 4px 0 3px; }
.grow { flex: 1; }
.dots { width: 23px; height: 23px; border-radius: 50%; background: #f4f4f4; display: grid; grid-template-columns: repeat(3, 3px); gap: 2px; align-content: center; justify-content: center; }
.dots i { width: 3px; height: 3px; background: #222; }

.taskbar { height: 33px; flex: none; display: flex; align-items: center; justify-content: center; position: relative; background: linear-gradient(90deg, #d4e1d8 0%, #dbe3cd 6%, #d4e2d8 12%, #d5e5d0 20%, #d3e0da 28%, #cfe6c6 34%, #d2ecc9 50%, #d9efbd 61%, #eaf3a4 67%, #f3ecc4 74%, #f1edd2 82%, #e9f5b5 90%, #ecf0df 95%, #efefef 100%); }
.tray { display: flex; align-items: center; gap: 5px; padding: 1px 0 0 2px; }
.app { width: 24px; height: 26px; border-radius: 3px; position: relative; }
.app:nth-child(1) { width: 18px; }
.find { width: 145px; height: 20px; border-radius: 10px; background: #edf6ec; display: flex; align-items: center; padding: 0 2px 0 7px; gap: 6px; margin: 0 0 0 3px; }
.find input { flex: 1; min-width: 0; border: 0; background: none; outline: 0; font: inherit; font-size: 9px; padding: 0; }
.find input::placeholder { color: #5c635c; opacity: 1; }
.app em { position: absolute; right: 1px; top: 1px; min-width: 11px; height: 11px; border-radius: 6px; background: #d92f3c; color: #fff; font-size: 7px; line-height: 11px; }
.app em.j { background: #5d3a32; }
.app em.rec { background: #f00a0a; min-width: 8px; height: 8px; right: 2px; }
.app em.w { background: #fff; color: #999; }
.telegram::after, .tri::after, .yellow::after, .obs::after, .chromeW::after, .chromeJ::after { content: ""; position: absolute; bottom: 0; width: 4px; height: 2px; border-radius: 1px; background: #75806f; }
.chromeJ { background: #eef7e6; }
.chromeJ::after { width: 10px; background: #1775c2; }
.sq { width: 16px; height: 16px; background: #f7e313; color: #222; font-size: 3px; line-height: 16px; font-weight: 700; display: flex; justify-content: center; }
time { position: absolute; right: 15px; top: 7px; text-align: right; font-size: 8px; line-height: 10px; color: #555; }
</style>
